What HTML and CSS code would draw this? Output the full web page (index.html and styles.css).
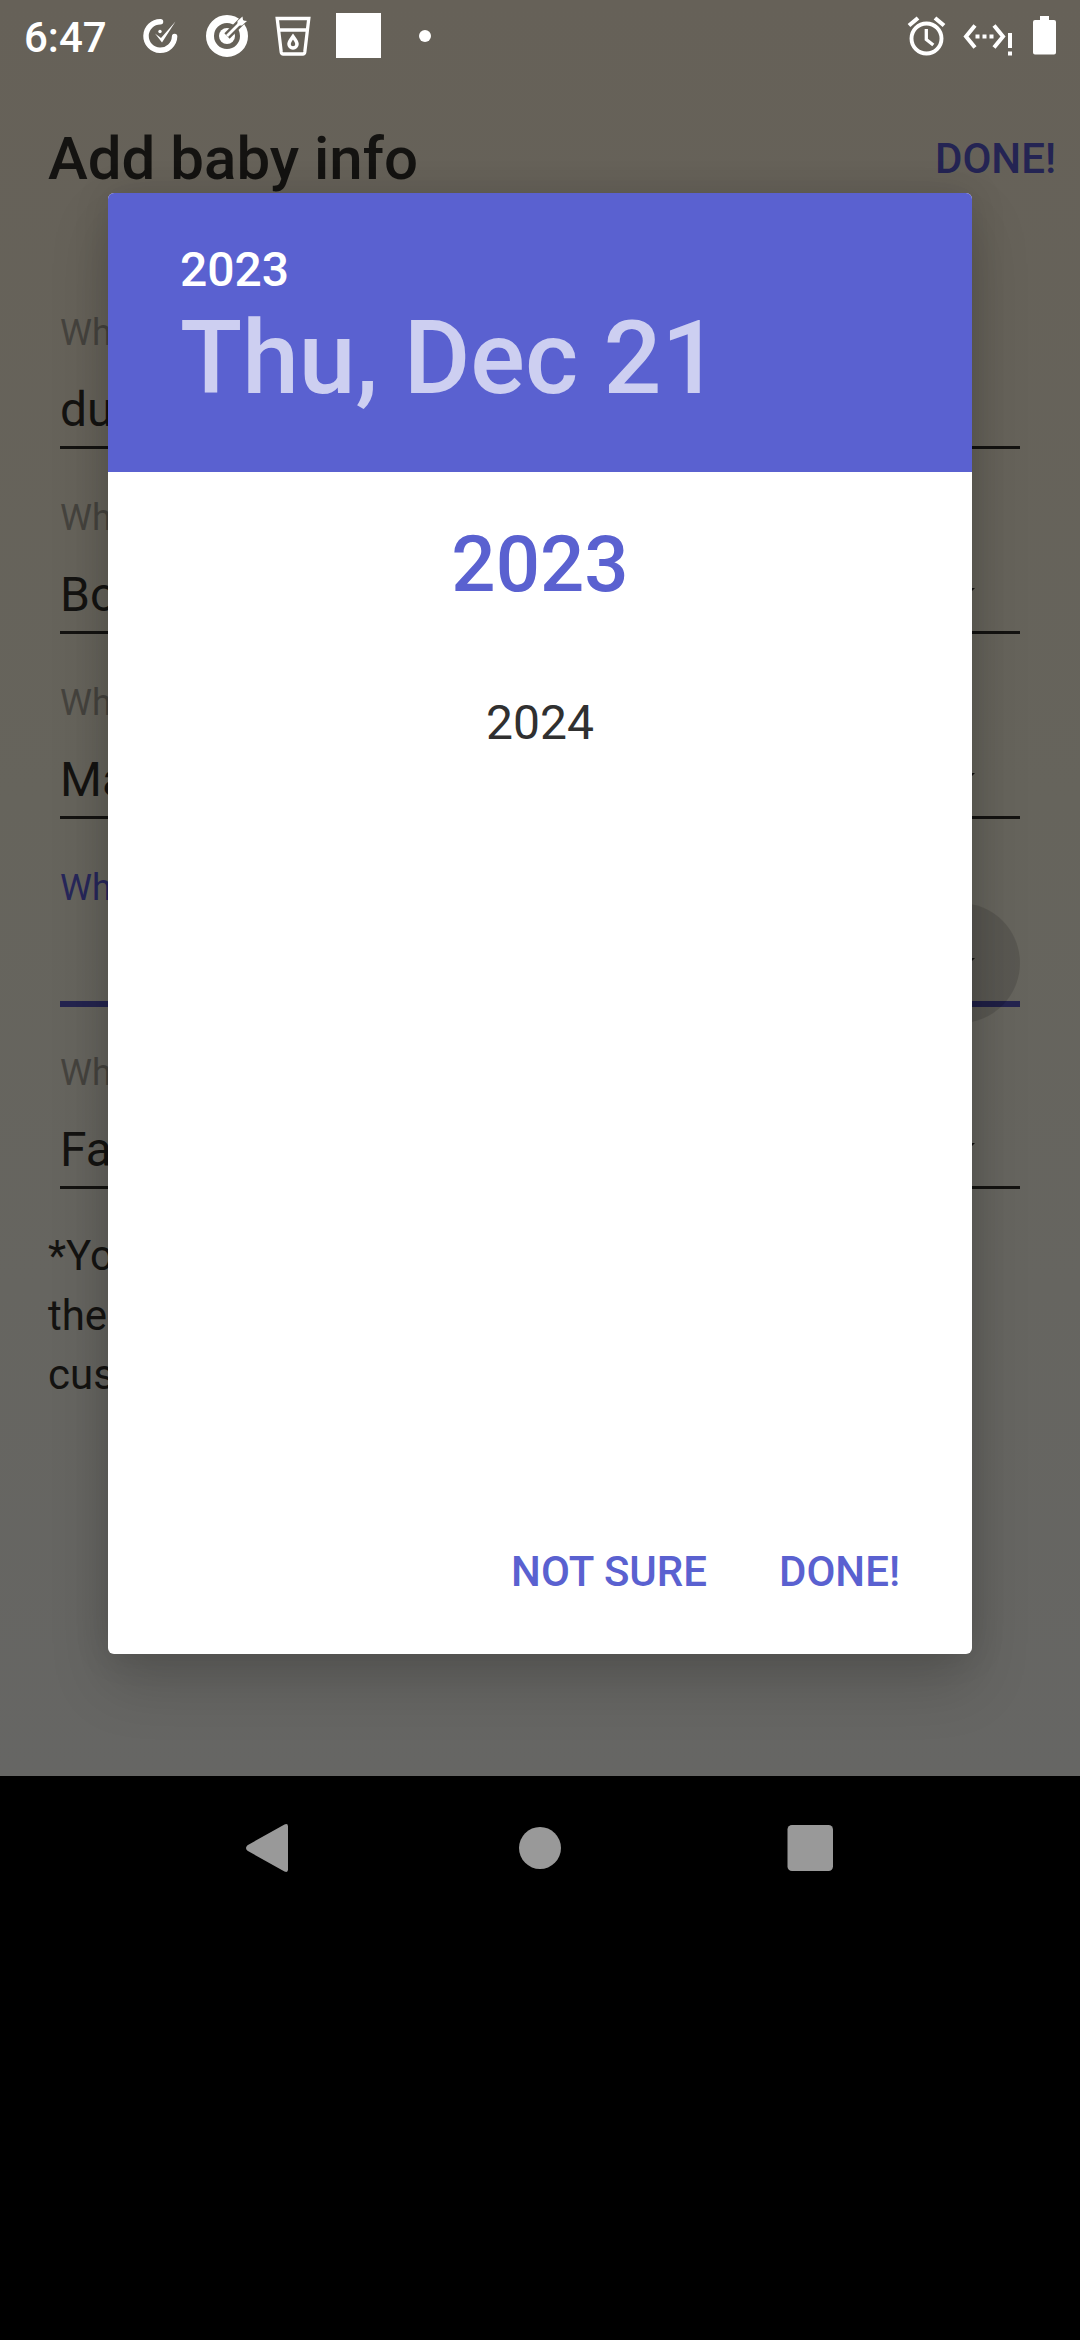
FILE: index.html
```html
<!DOCTYPE html>
<html lang="en">
<head>
<meta charset="utf-8">
<title>Add baby info</title>
<link rel="stylesheet" href="styles.css">
</head>
<body>
<div class="app">
  <header class="status">
    <span class="clock">6:47</span>
    <div class="notifications">
      <svg viewBox="0 0 66 72"><path d="M32.500 21.700A14.300 14.300 0 1 0 46.600 36.500" fill="none" stroke="#fff" stroke-width="5.500" stroke-linecap="round"/><path d="M27 33.500l6 4.500 14.500-16.500L34 42.500z" fill="#fff"/><circle cx="32" cy="31.500" r="1.700" fill="#fff"/></svg>
      <svg viewBox="0 0 66 72"><circle cx="33" cy="36" r="17" fill="none" stroke="#fff" stroke-width="8"/><circle cx="33" cy="36" r="8" fill="#fff"/><path d="M33 36L52 17" stroke="#666158" stroke-width="7.500"/><path d="M33 36L49 20" stroke="#fff" stroke-width="2.800"/><path d="M43.500 25.500V21l5-4.500.5 4 4 .5-5 4.500z" fill="#fff"/></svg>
      <svg viewBox="0 0 66 72" fill="none" stroke="#fff"><path d="M17.200 18.500h31.600l-4 33.500q-.3 2-2 2H23.200q-1.700 0-2-2zM18.500 30h29" stroke-width="3.300"/><path d="M33 36.500c-2.500 3.500-4 5-4 7.500a4 4 0 0 0 8 0c0-2.500-1.500-4-4-7.500z" stroke-width="3.500"/></svg>
      <svg viewBox="0 0 66 72"><path d="M10 13h45v45H10z" fill="#fff"/></svg>
      <svg viewBox="0 0 66 72"><circle cx="33" cy="36" r="6" fill="#fff"/></svg>
    </div>
    <svg class="system" viewBox="0 0 160 72" fill="none" stroke="#fff"><circle cx="26.500" cy="38.500" r="15" stroke-width="3.900"/><path d="M26.300 29v10.500l7 5.500" stroke-width="3.300"/><path d="M9 25.500l9-7.500M44 25.500L35 18" stroke-width="4.200"/><path d="M75 25.500l-9 11L75 47.500M94 25.500l9 11-9 11" stroke-width="4"/><path d="M75.500 36.500h4m3 0h4m3 0h4" stroke-width="4"/><path d="M110 33v15m0 3.500v4" stroke-width="4"/><path d="M140 16h9v4h5q2 0 2 2v30.500q0 2-2 2h-19q-2 0-2-2V22q0-2 2-2h5z" fill="#fff" stroke="none"/></svg>
  </header>
  <div class="toolbar"><h1>Add baby info</h1><span class="save">DONE!</span></div>
  <form class="form">
    <div class="field"><label>Wh</label><div class="value">du</div></div>
    <div class="field"><label>Wh</label><div class="value">Bo<i class="caret"></i></div></div>
    <div class="field"><label>Wh</label><div class="value">Ma<i class="caret"></i></div></div>
    <div class="field active"><label>Wh</label><div class="value"><i class="caret"></i></div></div>
    <div class="field"><label>Wh</label><div class="value">Fa<i class="caret"></i></div></div>
  </form>
  <p class="note">*Yo<br>the<br>cus</p>
</div>
<nav class="nav">
  <svg viewBox="0 0 270 144"><path d="M112.500 69.200L149.500 48.500q3.500-1.500 3.500 2v43q0 3.500-3.500 2L112.500 74.800q-3-2.800 0-5.600z" fill="#999"/></svg>
  <svg viewBox="0 0 270 144"><circle cx="135" cy="72" r="21" fill="#999"/></svg>
  <svg viewBox="0 0 270 144"><rect x="112.500" y="49" width="45.500" height="46" rx="4.500" fill="#999"/></svg>
</nav>
<section class="dialog">
  <div class="dialog-head"><div class="head-year">2023</div><div class="head-date">Thu, Dec 21</div></div>
  <div class="years"><div class="year selected">2023</div><div class="year">2024</div></div>
  <div class="actions"><span>NOT SURE</span><span>DONE!</span></div>
</section>
</body>
</html>
```
FILE: styles.css
```css
* { box-sizing: border-box; }
body {
  position: relative;
  width: 1080px;
  height: 2340px;
  margin: 0;
  overflow: hidden;
  background: #000;
  font-family: Roboto, sans-serif;
}
.app {
  height: 1776px;
  background: linear-gradient(#666158, #66645c 45%, #666664);
  color: #141311;
}
.status {
  display: flex;
  height: 72px;
  color: #fff;
}
.clock {
  width: 128px;
  padding-left: 24px;
  font-size: 42px;
  font-weight: 500;
  line-height: 76px;
}
.notifications { display: flex; flex: 1; }
.notifications svg { width: 66px; height: 72px; }
.system { width: 160px; height: 72px; margin-right: 20px; }
.toolbar {
  display: flex;
  justify-content: space-between;
  height: 168px;
  padding: 0 24px 0 48px;
  line-height: 173px;
}
.toolbar h1 { margin: 0; font-size: 60px; font-weight: 500; }
.save { color: #242453; font-size: 42px; font-weight: 500; }
.form { height: 986px; padding: 71px 60px 0; }
.field { height: 185px; }
.field label {
  display: block;
  height: 42px;
  font-size: 36px;
  line-height: 44px;
  color: #45433e;
}
.value {
  position: relative;
  height: 96px;
  padding-top: 28px;
  border-bottom: 3px solid #141311;
  font-size: 48px;
  line-height: 57px;
}
.active label { color: #27275a; }
.active .value { height: 99px; border-bottom: 6px solid #24244f; }
.active .value::before {
  content: "";
  position: absolute;
  right: 0;
  top: -5px;
  width: 120px;
  height: 120px;
  border-radius: 50%;
  background: rgba(0, 0, 0, .12);
}
.caret {
  position: absolute;
  right: 45px;
  top: 50px;
  border: 15px solid transparent;
  border-top-color: #141311;
  border-bottom: 0;
}
.note { margin: 0; padding: 0 48px; font-size: 42px; line-height: 59.5px; }
.nav { display: flex; justify-content: center; height: 144px; }
.nav svg { flex: none; width: 270px; height: 144px; }
.dialog {
  position: absolute;
  left: 108px;
  top: 193px;
  display: flex;
  flex-direction: column;
  width: 864px;
  height: 1461px;
  overflow: hidden;
  border-radius: 6px;
  background: #fff;
  color: #5a61d0;
  box-shadow: 0 30px 60px rgba(0, 0, 0, .16), 0 0 36px rgba(0, 0, 0, .12);
}
.dialog-head {
  height: 279px;
  padding: 49px 72px 0;
  background: #5a61d0;
  color: #fff;
  font-weight: 500;
}
.head-year { font-size: 48px; line-height: 56px; }
.head-date { font-size: 102px; line-height: 120px; color: #cdcff1; }
.years { flex: 1; padding-top: 12px; text-align: center; }
.year { height: 159px; font-size: 48px; line-height: 159px; color: #303030; }
.year.selected { color: #5a61d0; font-size: 78px; font-weight: 500; line-height: 161px; }
.actions {
  display: flex;
  justify-content: flex-end;
  gap: 72px;
  height: 156px;
  padding-right: 72px;
  font-size: 42px;
  font-weight: 500;
  line-height: 148px;
}
```
